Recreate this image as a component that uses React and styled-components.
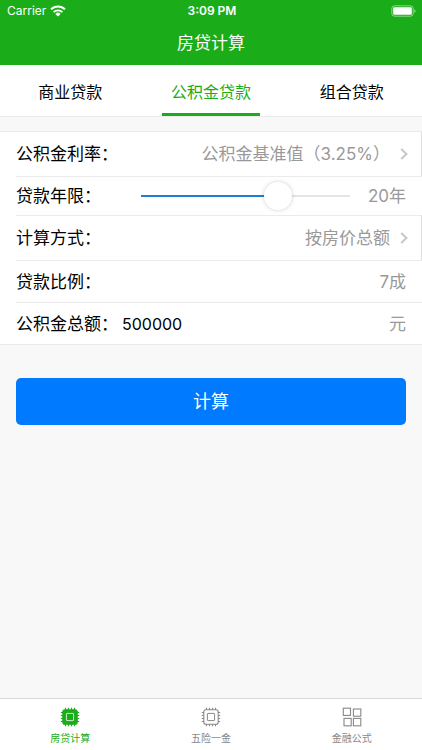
import React, { useState } from "react";
import styled, { createGlobalStyle, css, ThemeProvider } from "styled-components";

const theme = {
  palette: {
    green: "#1aad19",
    blue: "#007aff",
    track: "#1e7dd2",
    text: "#000000",
    muted: "#999999",
    line: "#ebebeb",
    page: "#f8f8f8",
  },
};

const GlobalStyle = createGlobalStyle`
  * {
    box-sizing: border-box;
  }

  body {
    margin: 0;
    background: ${theme.palette.page};
    font-family: Inter, "Noto Sans CJK SC", sans-serif;
  }

  button,
  input,
  select {
    font-family: inherit;
  }
`;

const control = css`
  appearance: none;
  margin: 0;
  padding: 0;
  border: 0;
  outline: none;
  background: transparent;
`;

const Page = styled.div`
  display: flex;
  flex-direction: column;
  min-height: 100vh;
`;

const Header = styled.header`
  background: ${(props) => props.theme.palette.green};
  color: #fff;
`;

const StatusBar = styled.div`
  display: grid;
  grid-template-columns: 1fr auto 1fr;
  align-items: center;
  height: 22px;
  padding: 0 5px 0 7px;
  font-size: 12px;
  line-height: 22px;
`;

const Carrier = styled.span`
  display: flex;
  align-items: center;
  gap: 4px;
`;

const Clock = styled.span`
  font-weight: 600;
`;

const Battery = styled.svg`
  justify-self: end;
`;

const Title = styled.h1`
  margin: 0;
  font-size: 17px;
  font-weight: 400;
  line-height: 43px;
  text-align: center;
`;

const Tabs = styled.div`
  display: flex;
  border-bottom: 1px solid ${(props) => props.theme.palette.line};
  background: #fff;
`;

const TabCell = styled.div`
  display: flex;
  flex: 1;
  justify-content: center;
`;

const Tab = styled.button`
  ${control}
  width: 98px;
  height: 51px;
  border-top: 3px solid transparent;
  border-bottom: 3px solid
    ${(props) => (props.$active ? props.theme.palette.green : "transparent")};
  color: ${(props) =>
    props.$active ? props.theme.palette.green : props.theme.palette.text};
  font-size: 16px;
`;

const Form = styled.form`
  display: flex;
  flex: 1;
  flex-direction: column;
  gap: 33px;
  padding-top: 14px;
`;

const Cells = styled.div`
  border: solid ${(props) => props.theme.palette.line};
  border-width: 1px 0;
  background: #fff;
`;

const Cell = styled.div`
  display: flex;
  align-items: center;
  min-height: ${(props) => props.$height || 42}px;
  margin-left: 16px;
  padding-right: 16px;
  border-top: 1px solid ${(props) => props.theme.palette.line};
  font-size: 17px;
  line-height: 24px;

  &:first-child {
    border-top: 0;
  }

  ${(props) =>
    props.$link &&
    css`
      padding-right: 13px;
      border-right: 1px solid #dedede;
    `}
`;

const Label = styled.label`
  flex: none;
`;

const Value = styled.output`
  margin-left: auto;
  color: ${(props) => props.theme.palette.muted};
`;

const Select = styled.select`
  ${control}
  flex: 1;
  min-width: 0;
  margin-right: 10px;
  color: ${(props) => props.theme.palette.muted};
  font-size: 17px;
  line-height: 24px;
  text-align-last: right;
`;

const Amount = styled.input`
  ${control}
  flex: 1;
  min-width: 0;
  margin-left: 4px;
  color: ${(props) => props.theme.palette.text};
  font-size: 16px;
`;

const Slider = styled.input`
  ${control}
  flex: 1;
  min-width: 0;
  height: 30px;
  margin: 0 4px 0 26px;
  background-position: center;
  background-repeat: no-repeat;
  background-size: calc(100% - 28px) 2px;

  &::-webkit-slider-thumb {
    appearance: none;
    width: 28px;
    height: 28px;
    border-radius: 50%;
    background: #fff;
    box-shadow: 0 0 4px rgba(0, 0, 0, 0.2);
  }
`;

const Submit = styled.button`
  ${control}
  height: 47px;
  margin: 0 16px;
  padding-bottom: 3px;
  border-radius: 5px;
  background: ${(props) => props.theme.palette.blue};
  color: #fff;
  font-size: 18px;
`;

const TabBar = styled.nav`
  display: flex;
  border-top: 1px solid #d9d9d9;
  background: #fff;
`;

const TabBarLink = styled.a`
  display: flex;
  flex: 1;
  flex-direction: column;
  align-items: center;
  gap: 4px;
  height: 51px;
  padding-top: 8px;
  color: ${(props) =>
    props.$active ? props.theme.palette.green : "#888888"};
  font-size: 10px;
  line-height: 14px;
  text-decoration: none;
`;

const WifiIcon = () => (
  <svg width="16" height="12" viewBox="0 0 16 12" fill="none" aria-hidden="true">
    <path d="M1 4.4a10 10 0 0 1 14 0" stroke="#fff" strokeWidth="2" />
    <path d="M3.6 7.2a6.2 6.2 0 0 1 8.8 0" stroke="#fff" strokeWidth="1.9" />
    <path d="M5.4 8.9a3.7 3.7 0 0 1 5.2 0L8 11.6z" fill="#fff" />
  </svg>
);

const BatteryIcon = () => (
  <Battery width="26" height="12" viewBox="0 0 26 12" aria-hidden="true">
    <rect x="0.8" y="0.8" width="21.4" height="10.4" rx="2.8" fill="none" stroke="#fff" strokeOpacity="0.5" />
    <rect x="2.2" y="2.2" width="18.6" height="7.6" rx="1.4" fill="#fff" />
    <path d="M23.4 4.2v3.6c1.5-.5 1.5-3.1 0-3.6z" fill="#fff" fillOpacity="0.6" />
  </Battery>
);

const ChevronIcon = () => (
  <svg width="8" height="12" viewBox="0 0 8 12" fill="none" aria-hidden="true">
    <path d="M1.2 1l5.3 5-5.3 5" stroke="#c4c4c9" strokeWidth="1.8" />
  </svg>
);

const ChipIcon = ({ filled = false }) => (
  <svg width="20" height="20" viewBox="0 0 20 20" fill="none" stroke="currentColor" aria-hidden="true">
    <path
      d="M5.5 .8v2M8.5 .8v2M11.5 .8v2M14.5 .8v2M5.5 17.2v2M8.5 17.2v2M11.5 17.2v2M14.5 17.2v2M.8 5.5h2M.8 8.5h2M.8 11.5h2M.8 14.5h2M17.2 5.5h2M17.2 8.5h2M17.2 11.5h2M17.2 14.5h2"
      strokeWidth="1.1"
    />
    <rect x="2.8" y="2.8" width="14.4" height="14.4" rx="2" fill={filled ? "currentColor" : "none"} strokeWidth="1.1" />
    <rect x="6.4" y="6.4" width="7.2" height="7.2" rx="0.5" stroke={filled ? "#c9ecc8" : "currentColor"} />
  </svg>
);

const GridIcon = () => (
  <svg width="20" height="20" viewBox="0 0 20 20" fill="none" stroke="currentColor" strokeWidth="1.1" aria-hidden="true">
    <rect x="1.3" y="1.2" width="7.2" height="7.2" />
    <rect x="11.4" y="2" width="7.4" height="7.2" />
    <rect x="2" y="11.4" width="7.2" height="7.4" />
    <rect x="11.4" y="11.4" width="7.4" height="7.4" />
  </svg>
);

const LOAN_TYPES = ["商业贷款", "公积金贷款", "组合贷款"];

const MIN_YEARS = 1;
const MAX_YEARS = 30;

const App = () => {
  const [loanType, setLoanType] = useState("公积金贷款");
  const [years, setYears] = useState(20);
  const [amount, setAmount] = useState("500000");

  const progress = ((years - MIN_YEARS) / (MAX_YEARS - MIN_YEARS)) * 100;

  return (
    <ThemeProvider theme={theme}>
      <GlobalStyle />
      <Page>
        <Header>
          <StatusBar>
            <Carrier>
              Carrier
              <WifiIcon />
            </Carrier>
            <Clock>3:09 PM</Clock>
            <BatteryIcon />
          </StatusBar>
          <Title>房贷计算</Title>
        </Header>
        <Tabs role="tablist">
          {LOAN_TYPES.map((type) => (
            <TabCell key={type} role="presentation">
              <Tab
                type="button"
                role="tab"
                aria-selected={type === loanType}
                $active={type === loanType}
                onClick={() => setLoanType(type)}
              >
                {type}
              </Tab>
            </TabCell>
          ))}
        </Tabs>
        <Form onSubmit={(event) => event.preventDefault()}>
          <Cells>
            <Cell $link $height={44}>
              <Label htmlFor="rate">公积金利率：</Label>
              <Select id="rate">
                <option>公积金基准值（3.25%）</option>
              </Select>
              <ChevronIcon />
            </Cell>
            <Cell $height={39}>
              <Label htmlFor="years">贷款年限：</Label>
              <Slider
                id="years"
                type="range"
                min={MIN_YEARS}
                max={MAX_YEARS}
                value={years}
                onChange={(event) => setYears(Number(event.target.value))}
                style={{
                  backgroundImage: `linear-gradient(to right, ${theme.palette.track} ${progress}%, #e5e5e5 ${progress}%)`,
                }}
              />
              <Value htmlFor="years">{years}年</Value>
            </Cell>
            <Cell $link $height={45}>
              <Label htmlFor="method">计算方式：</Label>
              <Select id="method">
                <option>按房价总额</option>
              </Select>
              <ChevronIcon />
            </Cell>
            <Cell>
              <Label htmlFor="ratio">贷款比例：</Label>
              <Value id="ratio">7成</Value>
            </Cell>
            <Cell>
              <Label htmlFor="amount">公积金总额：</Label>
              <Amount
                id="amount"
                type="text"
                inputMode="numeric"
                value={amount}
                onChange={(event) => setAmount(event.target.value)}
              />
              <Value as="span">元</Value>
            </Cell>
          </Cells>
          <Submit type="submit">计算</Submit>
        </Form>
        <TabBar>
          <TabBarLink href="#loan" $active aria-current="page">
            <ChipIcon filled />
            房贷计算
          </TabBarLink>
          <TabBarLink href="#insurance">
            <ChipIcon />
            五险一金
          </TabBarLink>
          <TabBarLink href="#formula">
            <GridIcon />
            金融公式
          </TabBarLink>
        </TabBar>
      </Page>
    </ThemeProvider>
  );
};

export default App;
